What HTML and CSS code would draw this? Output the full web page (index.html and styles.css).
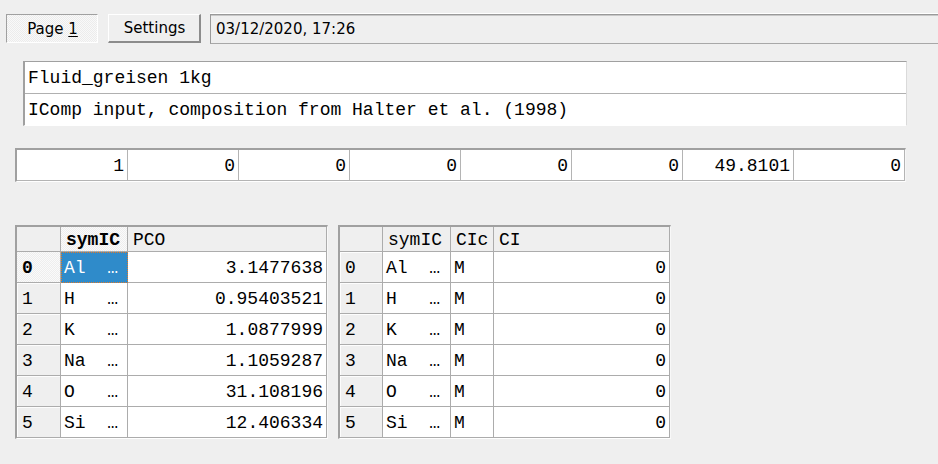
FILE: index.html
```html
<!DOCTYPE html>
<html>
<head>
<meta charset="utf-8">
<link rel="stylesheet" href="styles.css">
</head>
<body>
<div class="topbar">
  <div class="btn btn-pressed">Page <u>1</u></div>
  <div class="btn btn-raised">Settings</div>
  <div class="datefield">03/12/2020, 17:26</div>
</div>

<div class="titlebox">
  <div class="trow">Fluid_greisen 1kg</div>
  <div class="trow last">IComp input, composition from Halter et al. (1998)</div>
</div>

<div class="numrow">
  <div class="ncell">1</div>
  <div class="ncell">0</div>
  <div class="ncell">0</div>
  <div class="ncell">0</div>
  <div class="ncell">0</div>
  <div class="ncell">0</div>
  <div class="ncell">49.8101</div>
  <div class="ncell">0</div>
</div>

<div class="tables">
  <div class="grid grid1">
    <div class="h corner"></div>
    <div class="h hsel">symIC</div>
    <div class="h">PCO</div>

    <div class="rh rhsel">0</div>
    <div class="c csel">Al  …</div>
    <div class="c num">3.1477638</div>

    <div class="rh">1</div>
    <div class="c">H   …</div>
    <div class="c num">0.95403521</div>

    <div class="rh">2</div>
    <div class="c">K   …</div>
    <div class="c num">1.0877999</div>

    <div class="rh">3</div>
    <div class="c">Na  …</div>
    <div class="c num">1.1059287</div>

    <div class="rh">4</div>
    <div class="c">O   …</div>
    <div class="c num">31.108196</div>

    <div class="rh">5</div>
    <div class="c">Si  …</div>
    <div class="c num">12.406334</div>
  </div>

  <div class="grid grid2">
    <div class="h corner"></div>
    <div class="h">symIC</div>
    <div class="h">CIc</div>
    <div class="h">CI</div>

    <div class="rh">0</div>
    <div class="c">Al  …</div>
    <div class="c">M</div>
    <div class="c num">0</div>

    <div class="rh">1</div>
    <div class="c">H   …</div>
    <div class="c">M</div>
    <div class="c num">0</div>

    <div class="rh">2</div>
    <div class="c">K   …</div>
    <div class="c">M</div>
    <div class="c num">0</div>

    <div class="rh">3</div>
    <div class="c">Na  …</div>
    <div class="c">M</div>
    <div class="c num">0</div>

    <div class="rh">4</div>
    <div class="c">O   …</div>
    <div class="c">M</div>
    <div class="c num">0</div>

    <div class="rh">5</div>
    <div class="c">Si  …</div>
    <div class="c">M</div>
    <div class="c num">0</div>
  </div>
</div>
</body>
</html>
```

FILE: styles.css
```css
html, body {
  margin: 0;
  padding: 0;
  background: #efefef;
  overflow: hidden;
}
body {
  width: 938px;
  height: 464px;
  font-family: "DejaVu Sans", sans-serif;
  color: #000;
}

.topbar {
  display: flex;
  align-items: stretch;
  padding: 14px 0 0 6px;
  height: 29px;
}
.btn {
  box-sizing: border-box;
  height: 29px;
  font-size: 15px;
  line-height: 29px;
  text-align: center;
  overflow: hidden;
}
.btn u { text-decoration-thickness: 1px; text-underline-offset: 2px; }
.btn-pressed {
  width: 92px;
  border-top: 1px solid #a0a0a0;
  border-left: 1px solid #a0a0a0;
  border-right: 1px solid #fff;
  border-bottom: 1px solid #fff;
  background-color: #f5f5f5;
  background-image: repeating-conic-gradient(#f9f9f9 0 25%, #ececec 0 50%);
  background-size: 2px 2px;
  padding-left: 1px;
}
.btn-raised {
  width: 93px;
  margin-left: 10px;
  border-top: 1px solid #fff;
  border-left: 1px solid #fff;
  border-right: 2px solid #8c8c8c;
  border-bottom: 2px solid #8c8c8c;
  background: #efefef;
  line-height: 27px;
  padding-left: 1px;
}
.datefield {
  box-sizing: border-box;
  flex: 1;
  margin-left: 9px;
  margin-right: -4px;
  height: 30px;
  border: 1px solid #9a9a9a;
  border-bottom-color: #a8a8a8;
  box-shadow: inset 0 1px 0 #c8c8c8, 0 -1px 0 #fff;
  font-size: 15px;
  line-height: 29px;
  padding-left: 5px;
}

.titlebox {
  box-sizing: border-box;
  margin: 18px 0 0 23px;
  width: 884px;
  border-top: 1px solid #a0a0a0;
  border-left: 2px solid #a0a0a0;
  border-right: 1px solid #dadada;
  border-bottom: 1px solid #ffffff;
  font-family: "Liberation Mono", monospace;
  font-size: 18px;
}
.trow {
  box-sizing: border-box;
  height: 32px;
  background: #fff;
  border-bottom: 1px solid #b0b0b0;
  line-height: 33px;
  padding-left: 3px;
  white-space: pre;
  overflow: hidden;
}
.trow.last {
  height: 31px;
  border-bottom: 0;
  line-height: 32px;
}

.numrow {
  box-sizing: border-box;
  display: flex;
  margin: 22px 0 0 15px;
  width: 891px;
  border-top: 2px solid #a0a0a0;
  border-left: 2px solid #a0a0a0;
  border-right: 1px solid #f6f6f6;
  border-bottom: 1px solid #fff;
  font-family: "Liberation Mono", monospace;
  font-size: 18px;
}
.ncell {
  box-sizing: border-box;
  width: 111px;
  height: 31px;
  background: #fff;
  border-right: 1px solid #b4b4b4;
  border-bottom: 1px solid #b4b4b4;
  text-align: right;
  padding-right: 3px;
  line-height: 32px;
  overflow: hidden;
}

.tables {
  display: flex;
  align-items: flex-start;
  gap: 10px;
  margin: 43px 0 0 15px;
}
.grid {
  display: grid;
  border-top: 2px solid #a0a0a0;
  border-left: 2px solid #a0a0a0;
  border-right: 1px solid #f8f8f8;
  border-bottom: 1px solid #fff;
  grid-auto-rows: 31px;
  grid-template-rows: 25px;
  font-family: "Liberation Mono", monospace;
  font-size: 18px;
}
.grid1 { grid-template-columns: 44px 67px 199px; }
.grid2 { grid-template-columns: 43px 68px 43px 176px; }

.grid > div {
  box-sizing: border-box;
  border-right: 1px solid #acacac;
  border-bottom: 1px solid #acacac;
  white-space: pre;
  overflow: hidden;
}
.h {
  background: #efefef;
  line-height: 26px;
  padding-left: 5px;
}
.h.corner { background: #efefef; }
.hsel {
  font-weight: bold;
  background-color: #f6f6f6;
  background-image: repeating-conic-gradient(#fafafa 0 25%, #eeeeee 0 50%);
  background-size: 2px 2px;
}
.rh {
  background: #efefef;
  line-height: 32px;
  padding-left: 5px;
  box-shadow: inset 1px 1px 0 #fdfdfd;
}
.rhsel {
  font-weight: bold;
  background-color: #f6f6f6;
  background-image: repeating-conic-gradient(#fafafa 0 25%, #eeeeee 0 50%);
  background-size: 2px 2px;
  box-shadow: none;
}
.c {
  background: #fff;
  line-height: 32px;
  padding-left: 3px;
}
.c.num {
  text-align: right;
  padding-left: 0;
  padding-right: 3px;
}
.grid > .csel {
  background: #2f8bca;
  color: #fff;
  border: 1px dotted #e07a2a;
  line-height: 31px;
  padding-left: 2px;
}
```
